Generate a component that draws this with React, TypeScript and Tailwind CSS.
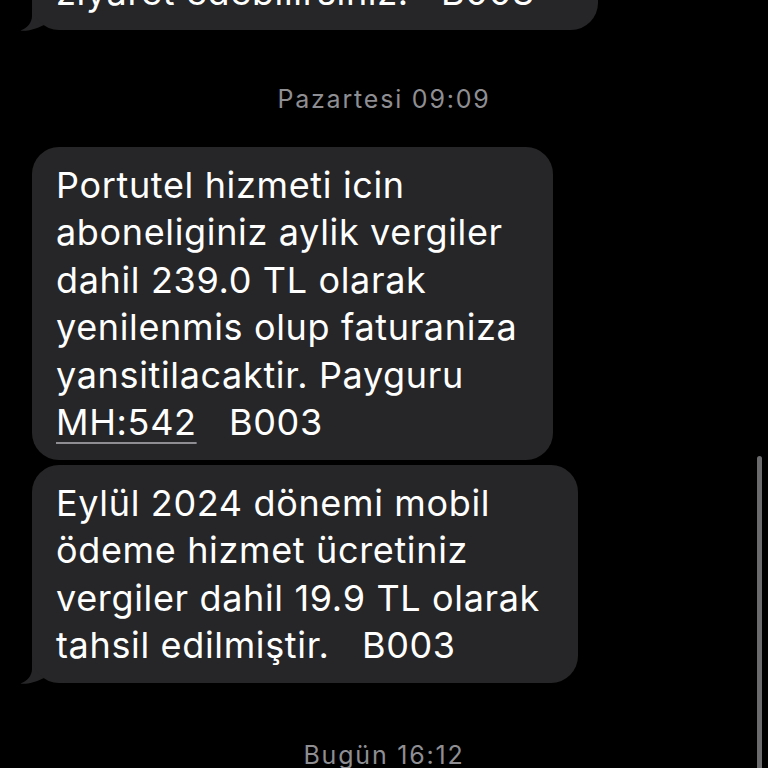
import React from "react";

function Tail() {
  return (
    <svg
      className="absolute left-[-12px] bottom-[-1px] h-[32px] w-[40px]"
      viewBox="0 0 40 32"
      aria-hidden="true"
    >
      <path
        d="M12 0 L12 17 C12 24 7 29 0.5 31.5 C6 32.5 15 30.5 24 26 L24 0 Z"
        fill="#262628"
      />
    </svg>
  );
}

function Bubble({
  width,
  lines,
  tail,
  className = "",
}: {
  width: string;
  lines: React.ReactNode[];
  tail?: boolean;
  className?: string;
}) {
  return (
    <div className={`relative ml-[32px] ${width} ${className}`}>
      {tail && <Tail />}
      <div className="relative rounded-[27px] bg-[#262628] pl-[24px] pt-[15px] pb-[13px] text-[36px] leading-[47.5px] tracking-[0.65px] text-white">
        {lines.map((l, i) => (
          <div key={i} className="whitespace-pre">
            {l}
          </div>
        ))}
      </div>
    </div>
  );
}

export default function App() {
  return (
    <div
      className="relative h-[768px] w-[768px] overflow-hidden bg-black"
      style={{ fontFamily: "Inter, 'Liberation Sans', sans-serif" }}
    >
      <div className="flex flex-col">
        <Bubble
          width="w-[566px]"
          className="mt-[-46px]"
          tail
          lines={["ziyaret edebilirsiniz.   B003"]}
        />
        <div className="mt-[54px] text-center text-[25px] leading-[30px] tracking-[1.8px] text-[#8e8e93]">
          Pazartesi 09:09
        </div>
        <Bubble
          width="w-[521px]"
          className="mt-[33px]"
          lines={[
            "Portutel hizmeti icin",
            "aboneliginiz aylik vergiler",
            "dahil 239.0 TL olarak",
            "yenilenmis olup faturaniza",
            "yansitilacaktir. Payguru",
            <>
              <span className="underline decoration-[#8e8e93] decoration-2 underline-offset-[7px]">
                MH:542
              </span>
              {"   B003"}
            </>,
          ]}
        />
        <Bubble
          width="w-[546px]"
          className="mt-[5px]"
          tail
          lines={[
            "Eylül 2024 dönemi mobil",
            "ödeme hizmet ücretiniz",
            "vergiler dahil 19.9 TL olarak",
            "tahsil edilmiştir.   B003",
          ]}
        />
        <div className="mt-[57px] text-center text-[25px] leading-[30px] tracking-[1.8px] text-[#8e8e93]">
          Bugün 16:12
        </div>
      </div>
      <div className="absolute right-[6px] top-[456px] h-[340px] w-[5px] rounded-full bg-[#6b6b6d]" />
    </div>
  );
}
